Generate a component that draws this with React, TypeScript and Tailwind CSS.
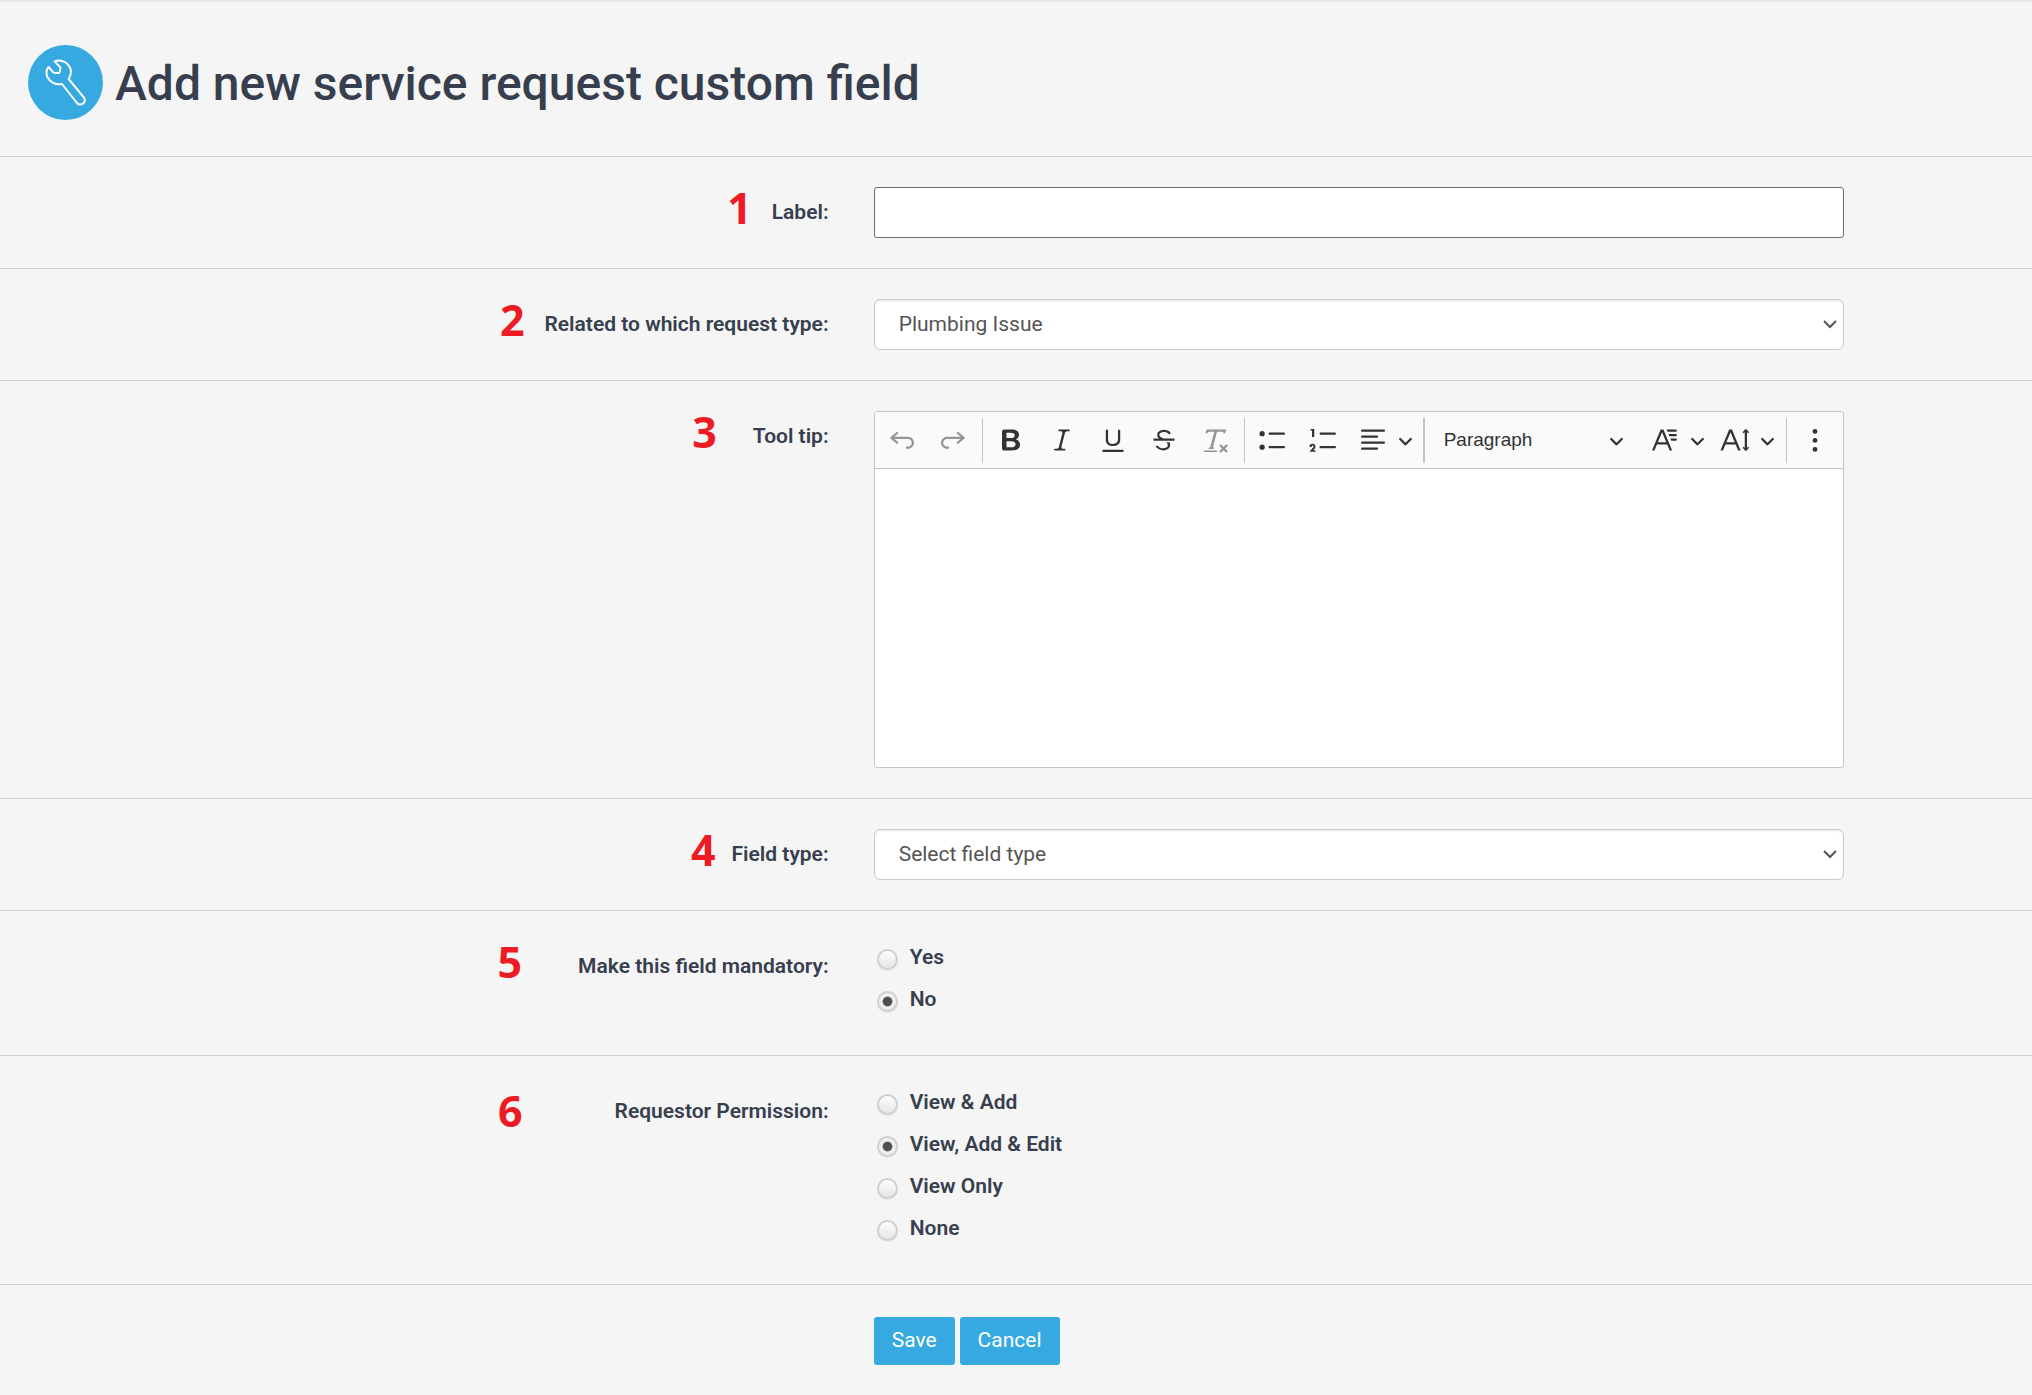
import React, { useState } from "react";

type Option = { value: string; label: string };

interface FieldRowProps {
  step: number;
  stepClass: string;
  label: string;
  htmlFor?: string;
  labelId?: string;
  children: React.ReactNode;
}

const REQUEST_TYPES: Option[] = [
  { value: "plumbing", label: "Plumbing Issue" },
  { value: "electrical", label: "Electrical Issue" },
];

const FIELD_TYPES: Option[] = [
  { value: "", label: "Select field type" },
  { value: "text", label: "Text" },
  { value: "date", label: "Date" },
];

const MANDATORY: Option[] = [
  { value: "yes", label: "Yes" },
  { value: "no", label: "No" },
];

const PERMISSIONS: Option[] = [
  { value: "add", label: "View & Add" },
  { value: "edit", label: "View, Add & Edit" },
  { value: "view", label: "View Only" },
  { value: "none", label: "None" },
];

// 20x20 toolbar icons
const ICONS: Record<string, React.ReactNode> = {
  undo: (
    <path d="m5.042 9.367 2.189 1.837a.75.75 0 0 1-.965 1.149l-3.788-3.18a.747.747 0 0 1-.21-.284.75.75 0 0 1 .17-.945L6.23 4.762a.75.75 0 1 1 .964 1.15L4.863 7.866h8.917A.75.75 0 0 1 14 7.9a4 4 0 1 1-1.477 7.718l.344-1.489a2.5 2.5 0 1 0 1.094-4.73l.008-.032H5.042z" />
  ),
  redo: (
    <path d="m14.958 9.367-2.189 1.837a.75.75 0 0 0 .965 1.149l3.788-3.18a.747.747 0 0 0 .21-.284.75.75 0 0 0-.17-.945L13.77 4.762a.75.75 0 1 0-.964 1.15l2.331 1.955H6.22A.75.75 0 0 0 6 7.9a4 4 0 1 0 1.477 7.718l-.344-1.489A2.5 2.5 0 1 1 6.039 9.4l-.008-.032h8.927z" />
  ),
  bold: (
    <path d="M10.187 17H5.773c-.637 0-1.092-.138-1.364-.415-.273-.277-.409-.718-.409-1.323V4.738c0-.617.14-1.062.419-1.332.279-.27.73-.406 1.354-.406h4.68c.69 0 1.288.041 1.793.124.506.083.96.242 1.36.477.341.197.644.447.906.75a3.262 3.262 0 0 1 .808 2.162c0 1.401-.722 2.426-2.167 3.075C15.05 10.175 16 11.315 16 13.01a3.756 3.756 0 0 1-2.296 3.504 6.1 6.1 0 0 1-1.517.377c-.571.073-1.238.11-2 .11zm-.217-6.217H7v4.087h3.069c1.977 0 2.965-.69 2.965-2.072 0-.707-.256-1.22-.768-1.537-.512-.319-1.277-.478-2.296-.478zM7 5.13v3.619h2.606c.729 0 1.292-.067 1.69-.2a1.6 1.6 0 0 0 .91-.765c.165-.267.247-.566.247-.897 0-.707-.26-1.176-.778-1.409-.519-.232-1.31-.348-2.375-.348H7z" />
  ),
  italic: (
    <path d="m9.586 14.633.021.004c-.036.335.095.655.393.962.082.083.173.15.274.201h1.474a.6.6 0 1 1 0 1.2H5.304a.6.6 0 0 1 0-1.2h1.15c.474-.07.809-.182 1.005-.334.157-.122.291-.32.404-.597l2.416-9.55a1.053 1.053 0 0 0-.281-.823 1.12 1.12 0 0 0-.442-.296H8.15a.6.6 0 0 1 0-1.2h6.443a.6.6 0 1 1 0 1.2h-1.195c-.376.056-.65.155-.823.296-.215.175-.423.439-.623.79l-2.366 9.347z" />
  ),
  underline: (
    <path d="M3 18v-1.5h14V18zm2.2-8V3.6c0-.4.4-.6.8-.6.3 0 .7.2.7.6v6.2c0 2 1.3 2.8 3.2 2.8 1.9 0 3.4-.9 3.4-2.9V3.6c0-.3.4-.5.8-.5.3 0 .7.2.7.5V10c0 2.7-2.2 4-4.9 4-2.6 0-4.7-1.2-4.7-4z" />
  ),
  strike: (
    <path d="M7 16.4c-.8-.4-1.5-.9-2.2-1.5a.6.6 0 0 1-.2-.5l.3-.6h1c1 1.2 2.1 1.7 3.7 1.7 1 0 1.8-.3 2.3-.6.6-.4.6-1.2.6-1.3.2-1.2-.9-2.1-.9-2.1h2.1c.3.7.4 1.2.4 1.7v.8l-.6 1.2c-.6.8-1.1 1-1.6 1.2a6 6 0 0 1-2.4.6c-1 0-1.8-.3-2.5-.6zM6.8 9 6 8.3c-.4-.5-.5-.8-.5-1.6 0-.7.1-1.3.5-1.8.4-.6 1-1 1.6-1.3a6.3 6.3 0 0 1 4.7 0 4 4 0 0 1 1.7 1l.3.7c0 .1.2.4-.2.7-.4.2-.9.1-1 0a3 3 0 0 0-1.2-1c-.4-.2-1-.3-2-.4-.7 0-1.4.2-2 .6-.8.4-1 .8-1 1.5 0 .8.5 1 1.2 1.5.6.4 1.1.7 1.9 1H6.8zM3 10.5V9h14v1.5z" />
  ),
  removeFormat: (
    <path d="M8.69 14.915c.053.052.173.083.36.093a.366.366 0 0 1 .345.485l-.003.01a.738.738 0 0 1-.697.497h-2.67a.374.374 0 0 1-.353-.496l.013-.038a.681.681 0 0 1 .644-.458c.197-.012.325-.043.386-.093a.28.28 0 0 0 .072-.11L9.592 4.5H6.269c-.359-.017-.609.013-.75.09-.142.078-.289.265-.442.563-.192.29-.516.464-.864.464H4.17a.43.43 0 0 1-.407-.569L4.46 3h13.08l-.62 2.043a.81.81 0 0 1-.775.574h-.114a.486.486 0 0 1-.486-.486c.001-.284-.054-.464-.167-.54-.112-.076-.367-.106-.766-.091h-3.28l-2.68 10.257c-.006.074.007.127.038.158zM3 17h8a.5.5 0 1 1 0 1H3a.5.5 0 1 1 0-1zm11.299 1.17a.75.75 0 1 1-1.06-1.06l1.414-1.415-1.415-1.414a.75.75 0 0 1 1.06-1.06l1.415 1.414 1.414-1.415a.75.75 0 1 1 1.06 1.06l-1.413 1.415 1.414 1.415a.75.75 0 0 1-1.06 1.06l-1.415-1.414-1.414 1.414z" />
  ),
  bulleted: (
    <>
      <circle cx="2.75" cy="5.75" r="1.75" />
      <circle cx="2.75" cy="14.75" r="1.75" />
      <rect x="7" y="5" width="11" height="1.5" rx=".75" />
      <rect x="7" y="14" width="11" height="1.5" rx=".75" />
    </>
  ),
  numbered: (
    <path d="M7 5.75c0 .414.336.75.75.75h9.5a.75.75 0 1 0 0-1.5h-9.5a.75.75 0 0 0-.75.75zM3.5 3v5H2V3.7H1v-1h2.5V3zM.343 17.857l2.59-3.257H2.92a.6.6 0 1 0-1.04 0H.302a2 2 0 1 1 3.995 0h-.001c-.048.405-.16.734-.333.988-.175.254-.59.692-1.244 1.312H4.3v1h-4l.043-.043zM7 14.75a.75.75 0 0 1 .75-.75h9.5a.75.75 0 1 1 0 1.5h-9.5a.75.75 0 0 1-.75-.75z" />
  ),
  align: (
    <>
      <rect x="2" y="3" width="16" height="1.5" rx=".75" />
      <rect x="2" y="7" width="11.4" height="1.5" rx=".75" />
      <rect x="2" y="11" width="16" height="1.5" rx=".75" />
      <rect x="2" y="15" width="11.4" height="1.5" rx=".75" />
    </>
  ),
  fontFamily: (
    <path d="M11.03 3h6.149a.75.75 0 1 1 0 1.5h-5.514L11.03 3zm1.27 3h4.879a.75.75 0 1 1 0 1.5h-4.244L12.3 6zm1.27 3h3.609a.75.75 0 1 1 0 1.5h-2.973L13.57 9zm-2.754 2.5L8.038 4.785 5.261 11.5h5.555zm.62 1.5H4.641l-1.666 4.028H1.312l5.789-14h1.875l5.789 14h-1.663L11.436 13z" />
  ),
  fontSize: (
    <path d="M9.816 11.5 7.038 4.785 4.261 11.5h5.555Zm.62 1.5H3.641l-1.666 4.028H.312l5.789-14h1.875l5.789 14h-1.663L10.436 13Zm7.55 2.279.779-.779.707.707-2.265 2.265-2.193-2.265.707-.707.765.765V4.825c0-.042 0-.083.002-.123l-.77.77-.707-.707L17.207 2.5l2.265 2.265-.707.707-.782-.782c.002.043.003.089.003.135v10.454Z" />
  ),
  dots: (
    <>
      <circle cx="10" cy="4.3" r="1.6" />
      <circle cx="10" cy="10.3" r="1.6" />
      <circle cx="10" cy="16.3" r="1.6" />
    </>
  ),
};

function Icon({ name }: { name: string }) {
  return (
    <svg
      viewBox="0 0 20 20"
      className="size-[30px] shrink-0 fill-current"
      aria-hidden="true"
    >
      {ICONS[name]}
    </svg>
  );
}

function Caret() {
  return (
    <svg
      viewBox="0 0 10 10"
      className="size-[15px] shrink-0 fill-current"
      aria-hidden="true"
    >
      <path d="M.941 4.523a.75.75 0 1 1 1.06-1.06l3.006 3.005 3.005-3.005a.75.75 0 1 1 1.06 1.06l-3.549 3.55a.75.75 0 0 1-1.168-.136L.941 4.523z" />
    </svg>
  );
}

function ToolButton({
  icon,
  title,
  disabled,
}: {
  icon: string;
  title: string;
  disabled?: boolean;
}) {
  return (
    <button
      type="button"
      aria-label={title}
      disabled={disabled}
      className="flex h-[45px] w-[45px] shrink-0 items-center justify-center rounded-sm hover:bg-gray-200 disabled:opacity-50"
    >
      <Icon name={icon} />
    </button>
  );
}

function ToolDropdown({ icon, title }: { icon: string; title: string }) {
  return (
    <button
      type="button"
      aria-label={title}
      className="flex h-[45px] shrink-0 items-center gap-[10px] rounded-sm pr-1 pl-[5px] hover:bg-gray-200"
    >
      <Icon name={icon} />
      <Caret />
    </button>
  );
}

function Toolbar() {
  return (
    <div
      role="toolbar"
      className="flex h-[57px] items-center gap-[6px] border-b border-[#c4c4c4] bg-[#fafafa] px-[5px] text-[#333]"
    >
      <ToolButton icon="undo" title="Undo" disabled />
      <ToolButton icon="redo" title="Redo" disabled />
      <div className="h-[45px] w-px bg-[#c4c4c4]" />
      <ToolButton icon="bold" title="Bold" />
      <ToolButton icon="italic" title="Italic" />
      <ToolButton icon="underline" title="Underline" />
      <ToolButton icon="strike" title="Strikethrough" />
      <ToolButton icon="removeFormat" title="Remove Format" disabled />
      <div className="h-[45px] w-px bg-[#c4c4c4]" />
      <ToolButton icon="bulleted" title="Bulleted List" />
      <ToolButton icon="numbered" title="Numbered List" />
      <ToolDropdown icon="align" title="Text alignment" />
      <div className="h-[45px] w-[2px] bg-[#c4c4c4]" />
      <button
        type="button"
        className="flex h-[45px] w-[208px] items-center justify-between rounded-sm pr-[15px] pl-[13px] font-['Liberation_Sans',Arial,sans-serif] text-[19px] hover:bg-gray-200"
      >
        Paragraph
        <Caret />
      </button>
      <ToolDropdown icon="fontFamily" title="Font Family" />
      <ToolDropdown icon="fontSize" title="Font Size" />
      <div className="ml-auto h-[45px] w-px bg-[#c4c4c4]" />
      <ToolButton icon="dots" title="Show more items" />
    </div>
  );
}

function FieldRow({
  step,
  stepClass,
  label,
  htmlFor,
  labelId,
  children,
}: FieldRowProps) {
  return (
    <div className="flex border-b border-[#d0d0d0] py-[30px]">
      <div className="flex w-5/12 items-start justify-end pr-[18px]">
        <span
          className={`font-['Open_Sans','Noto_Sans',sans-serif] text-[43px] leading-[42px] font-bold text-[#ed1c24] ${stepClass}`}
        >
          {step}
        </span>
        <label
          id={labelId}
          htmlFor={htmlFor}
          className="pt-[10px] text-[21px] leading-[30px] font-semibold"
        >
          {label}
        </label>
      </div>
      <div className="w-1/2 pr-[19px] pl-[27px]">{children}</div>
    </div>
  );
}

function SelectBox({
  id,
  options,
  value,
  onChange,
}: {
  id: string;
  options: Option[];
  value: string;
  onChange: (value: string) => void;
}) {
  return (
    <div className="relative">
      <select
        id={id}
        value={value}
        onChange={(e) => onChange(e.target.value)}
        className="h-[51px] w-full appearance-none rounded-md border border-[#ccc] bg-white px-6 pt-px text-[21px] text-[#555] shadow-[inset_0_1px_2px_rgba(0,0,0,0.1)]"
      >
        {options.map((o) => (
          <option key={o.value} value={o.value}>
            {o.label}
          </option>
        ))}
      </select>
      <svg
        viewBox="0 0 14 9"
        className="pointer-events-none absolute top-[21px] right-[7px] h-[9px] w-[14px] fill-none stroke-[#555]"
        aria-hidden="true"
      >
        <path d="M1 1l6 6 6-6" strokeWidth="2" />
      </svg>
    </div>
  );
}

function RadioList({
  name,
  options,
  value,
  onChange,
}: {
  name: string;
  options: Option[];
  value: string;
  onChange: (value: string) => void;
}) {
  return (
    <div role="radiogroup" aria-labelledby={`${name}-label`}>
      {options.map((o) => (
        <div key={o.value} className="flex h-[42px] items-start">
          <input
            type="radio"
            id={`${name}-${o.value}`}
            name={name}
            checked={value === o.value}
            onChange={() => onChange(o.value)}
            className="mt-2 mr-3 ml-[3px] size-[21px] appearance-none rounded-full border-2 border-[#d0d0d0] bg-linear-to-b from-[#fdfdfd] to-[#e6e6e6] shadow-[0_1px_1px_rgba(0,0,0,0.08)] checked:bg-radial checked:from-[#505050] checked:from-35% checked:to-[#f0f0f0] checked:to-45%"
          />
          <label
            htmlFor={`${name}-${o.value}`}
            className="text-[21px] leading-8 font-semibold"
          >
            {o.label}
          </label>
        </div>
      ))}
    </div>
  );
}

function App() {
  const [label, setLabel] = useState("");
  const [requestType, setRequestType] = useState("plumbing");
  const [tooltip, setTooltip] = useState("");
  const [fieldType, setFieldType] = useState("");
  const [mandatory, setMandatory] = useState("no");
  const [permission, setPermission] = useState("edit");

  return (
    <div className="min-h-screen bg-[#f5f5f5] font-[Roboto,sans-serif] text-[#373f4e] shadow-[inset_0_2px_1px_#e8e8e8]">
      {/* Header */}
      <header className="flex items-start gap-3 border-b border-[#d0d0d0] px-7 pt-[45px] pb-[34px]">
        <svg
          viewBox="0 0 225 225"
          className="size-[75px] shrink-0"
          aria-hidden="true"
        >
          <circle cx="112.5" cy="112.5" r="112.5" fill="#37a9e1" />
          <path
            d="M80 49C93 44 112 48 121 60C130 71 131 87 122 102L168 158C177 172 158 185 147 174L102 117C84 121 66 112 58 96C54 86 55 74 62 66L76 82Q85 85 94 83Q98 76 97 67Z"
            fill="none"
            stroke="#fff"
            strokeWidth="6"
            strokeLinejoin="round"
          />
        </svg>
        <h1 className="text-[48px] leading-[77px] font-medium">
          Add new service request custom field
        </h1>
      </header>

      <form onSubmit={(e) => e.preventDefault()}>
        <FieldRow step={1} stepClass="mr-5" label="Label:" htmlFor="label">
          <input
            id="label"
            type="text"
            value={label}
            onChange={(e) => setLabel(e.target.value)}
            className="block h-[51px] w-full rounded-[3px] border border-[#6b6b6b] bg-white px-6 text-[21px]"
          />
        </FieldRow>

        <FieldRow
          step={2}
          stepClass="mr-5"
          label="Related to which request type:"
          htmlFor="request-type"
        >
          <SelectBox
            id="request-type"
            options={REQUEST_TYPES}
            value={requestType}
            onChange={setRequestType}
          />
        </FieldRow>

        <FieldRow step={3} stepClass="mr-9" label="Tool tip:" htmlFor="tooltip">
          <div className="overflow-hidden rounded-[3px] border border-[#c4c4c4] bg-white">
            <Toolbar />
            <textarea
              id="tooltip"
              value={tooltip}
              onChange={(e) => setTooltip(e.target.value)}
              className="block h-[298px] w-full resize-none p-4 text-[21px] outline-none"
            />
          </div>
        </FieldRow>

        <FieldRow
          step={4}
          stepClass="mr-4"
          label="Field type:"
          htmlFor="field-type"
        >
          <SelectBox
            id="field-type"
            options={FIELD_TYPES}
            value={fieldType}
            onChange={setFieldType}
          />
        </FieldRow>

        <FieldRow
          step={5}
          stepClass="mr-14"
          label="Make this field mandatory:"
          labelId="mandatory-label"
        >
          <RadioList
            name="mandatory"
            options={MANDATORY}
            value={mandatory}
            onChange={setMandatory}
          />
        </FieldRow>

        <FieldRow
          step={6}
          stepClass="mt-1 mr-23"
          label="Requestor Permission:"
          labelId="permission-label"
        >
          <RadioList
            name="permission"
            options={PERMISSIONS}
            value={permission}
            onChange={setPermission}
          />
        </FieldRow>

        {/* Actions */}
        <div className="flex py-[30px]">
          <div className="ml-[41.6667%] flex gap-[5px] pt-[2px] pl-[27px] text-[21px] text-white">
            <button
              type="submit"
              className="h-12 rounded-[3px] bg-[#37a9e1] px-[18px] hover:bg-[#2b98cf]"
            >
              Save
            </button>
            <button
              type="button"
              className="h-12 rounded-[3px] bg-[#37a9e1] px-[18px] hover:bg-[#2b98cf]"
            >
              Cancel
            </button>
          </div>
        </div>
      </form>
    </div>
  );
}

export default App;
